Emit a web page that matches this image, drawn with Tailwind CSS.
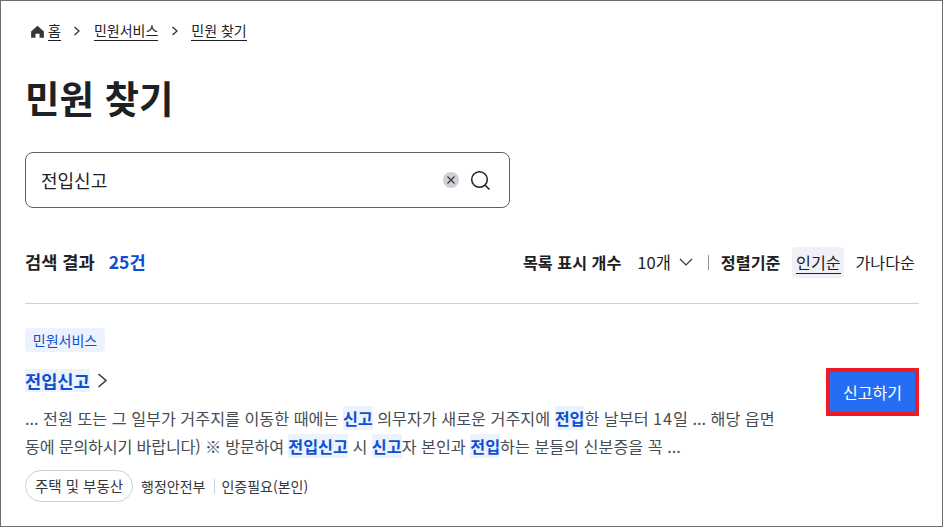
<!DOCTYPE html>
<html lang="ko">
<head>
<meta charset="UTF-8">
<title>민원 찾기</title>
<script src="https://cdn.jsdelivr.net/npm/@tailwindcss/browser@4"></script>
</head>
<body class="bg-white font-['Noto_Sans_CJK_KR','Noto_Sans',sans-serif] text-[#1e2124]">
<div class="h-[527px] w-[943px] overflow-hidden border border-[#6e6e6e] pl-[24px] pr-[23px]">
  <!-- breadcrumb -->
  <nav class="flex h-[20px] mt-[20px] items-center pl-[5px] text-[14px] leading-[20px]">
    <svg class="mr-[3px] h-[15px] w-[15px]" viewBox="0 0 16 16"><path fill="#33363d" d="M8 1.800 1.200 8v6.600h4.600v-4.200h4.400v4.200h4.600V8z"/></svg>
    <a class="border-b border-[#1e2124] h-[20px] leading-[18px]">홈</a>
    <svg class="mx-[11.500px] h-[10px] w-[10px]" viewBox="0 0 10 10" fill="none" stroke="#33363d" stroke-width="1.300"><path d="M2.500 1l4.500 4-4.500 4"/></svg>
    <a class="border-b border-[#1e2124] h-[20px] leading-[18px]">민원서비스</a>
    <svg class="mx-[11.500px] h-[10px] w-[10px]" viewBox="0 0 10 10" fill="none" stroke="#33363d" stroke-width="1.300"><path d="M2.500 1l4.500 4-4.500 4"/></svg>
    <a class="border-b border-[#1e2124] h-[20px] leading-[18px]">민원 찾기</a>
  </nav>

  <h1 class="mt-[28px] text-[37.500px] font-bold leading-[56px]">민원 찾기</h1>

  <!-- search -->
  <div class="mt-[27px] flex h-[56px] w-[485px] items-center rounded-[8px] border border-[#58616a] pl-[15px] pr-[18px]">
    <span class="flex-1 text-[18px]">전입신고</span>
    <span class="mr-[11px] flex h-[16px] w-[16px] items-center justify-center rounded-full bg-[#cdd1d5]">
      <svg class="h-[10px] w-[10px]" viewBox="0 0 10 10" fill="none" stroke="#33363d" stroke-width="1.200"><path d="M1.500 1.500l7 7M8.500 1.500l-7 7"/></svg>
    </span>
    <svg class="h-[21px] w-[21px]" viewBox="0 0 21 21" fill="none" stroke="#1e2124" stroke-width="1.500"><circle cx="9.500" cy="9.500" r="7.800"/><path d="M15 15l4.500 4.500"/></svg>
  </div>

  <!-- result header -->
  <div class="mt-[40px] flex h-[28px] items-center justify-between pr-[4px]">
    <div class="flex items-center text-[17.600px] font-bold">
      <span>검색 결과</span>
      <span class="ml-[14px] text-[#0b50d0]">25건</span>
    </div>
    <div class="flex items-center text-[16.200px]">
      <span class="font-bold">목록 표시 개수</span>
      <span class="ml-[16px] text-[16.500px]">10개</span>
      <svg class="ml-[8px] h-[10px] w-[14px]" viewBox="0 0 14 10" fill="none" stroke="#33363d" stroke-width="1.200"><path d="M1 2l6 6 6-6"/></svg>
      <span class="ml-[15px] mr-[12px] h-[15px] w-px bg-[#8a949e]"></span>
      <span class="font-bold">정렬기준</span>
      <span class="ml-[12px] flex h-[31px] w-[52px] items-center justify-center rounded-[4px] bg-[#eef2f7]"><span class="border-b border-[#1e2124] leading-[22px]">인기순</span></span>
      <span class="ml-[11px]">가나다순</span>
    </div>
  </div>

  <div class="mt-[27px] h-px bg-[#cdd1d5]"></div>

  <!-- result item -->
  <div class="relative">
    <span class="mt-[24px] inline-flex h-[24px] w-[80px] items-center justify-center rounded-[4px] bg-[#ecf2fe] text-[14px] text-[#0b50d0]">민원서비스</span>
    <div class="mt-[16px] flex h-[24px] items-center">
      <mark class="bg-[#ecf2fe] text-[17.600px] font-bold leading-[23px] text-[#0b50d0]">전입신고</mark>
      <svg class="ml-[7px] h-[15px] w-[11px]" viewBox="0 0 11 15" fill="none" stroke="#33363d" stroke-width="1.500"><path d="M1.500 1l7.500 6.500-7.500 6.500"/></svg>
    </div>
    <p class="mt-[12px] w-[770px] text-[16.200px] leading-[28px] text-[#464c53]">... 전원 또는 그 일부가 거주지를 이동한 때에는 <mark class="bg-[#ecf2fe] font-bold text-[#0b50d0]">신고</mark> 의무자가 새로운 거주지에 <mark class="bg-[#ecf2fe] font-bold text-[#0b50d0]">전입</mark>한 날부터 <span class="tracking-[1px]">14</span>일 ... 해당 읍면<br><span class="tracking-[-0.200px]">동에 문의하시기 바랍니다) ※ 방문하여 </span><mark class="bg-[#ecf2fe] font-bold text-[#0b50d0]">전입신고</mark> 시 <mark class="bg-[#ecf2fe] font-bold text-[#0b50d0]">신고</mark>자 본인과 <mark class="bg-[#ecf2fe] font-bold text-[#0b50d0]">전입</mark>하는 분들의 신분증을 꼭 ...</p>
    <div class="mt-[10px] flex items-center text-[14px] text-[#33363d]">
      <span class="flex h-[32px] w-[108px] items-center justify-center rounded-full border border-[#cdd1d5] text-[14.500px] text-[#33363d]">주택 및 부동산</span>
      <span class="ml-[8px]">행정안전부</span>
      <span class="ml-[9px] mr-[6px] h-[15px] w-px bg-[#cdd1d5]"></span>
      <span>인증필요(본인)</span>
    </div>
    <button class="absolute right-0 top-[64px] flex h-[48px] w-[93px] items-center justify-center border-[4px] border-[#ed1c24] bg-[#256ef4] text-[16px] text-white">신고하기</button>
  </div>
</div>
</body>
</html>
